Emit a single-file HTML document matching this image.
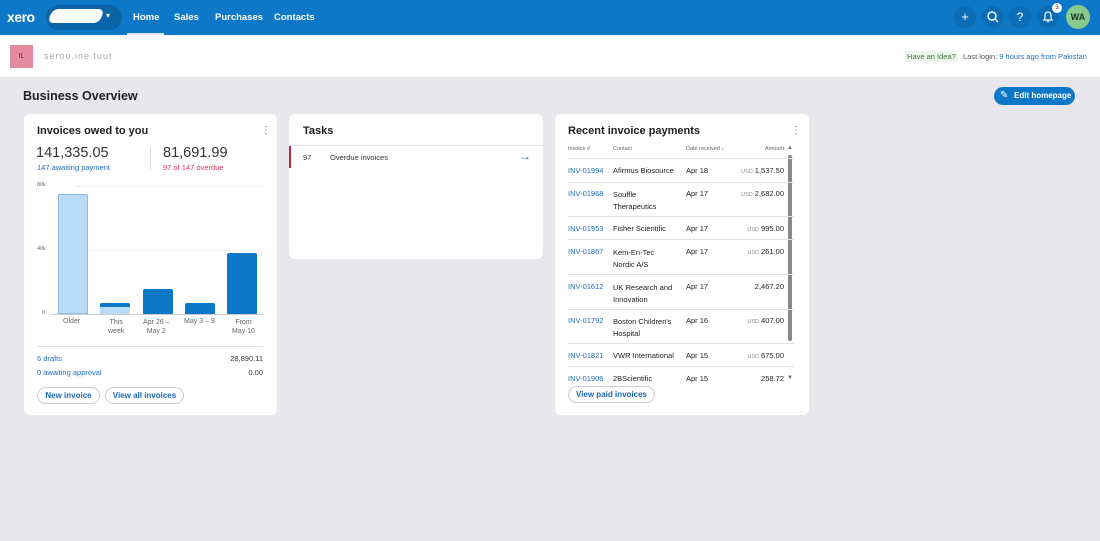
<!DOCTYPE html>
<html><head><meta charset="utf-8"><style>
*{box-sizing:border-box;margin:0;padding:0}
body{width:1100px;height:541px;background:#e7e7ec;font-family:"Liberation Sans",sans-serif;position:relative;overflow:hidden;color:#222}
.a{position:absolute;white-space:nowrap}
.nav{position:absolute;left:0;top:0;width:1100px;height:35px;background:#0c78c7}
.hdr{position:absolute;left:0;top:35px;width:1100px;height:42px;background:#fff}
.card{position:absolute;background:#fff;border-radius:6px}
.t{font-size:11px;font-weight:bold;color:#1e1e1e}
.s{font-size:7.5px}
.blue{color:#1f6fbf}
.btn{position:absolute;height:17px;border:1px solid #ccd;border-radius:9px;font-size:8px;font-weight:bold;color:#1a68b8;text-align:center;line-height:15px}
.row{position:absolute;left:13px;width:226px;border-top:1px solid #e2e2e2}
.ic{position:absolute;width:22px;height:22px;border-radius:11px;background:#0a6db5;top:6px;color:#fff;text-align:center;font-size:13px;line-height:22px}
.nl{position:absolute;top:12px;color:#fff;font-size:9.5px;font-weight:bold}
</style></head><body>
<div class="nav">
<div class="a" style="left:7px;top:9px;color:#fff;font-size:14px;font-weight:bold;letter-spacing:-0.5px">xero</div>
<div class="a" style="left:46px;top:5px;width:76px;height:25px;border-radius:12px;background:#0a65a8"></div>
<div class="a" style="left:50px;top:9px;width:52px;height:14px;background:#fff;border-radius:6px;transform:skewX(-20deg)"></div>
<div class="a" style="left:106px;top:11px;color:#fff;font-size:8px">▾</div>
<div class="nl" style="left:133px">Home</div>
<div class="a" style="left:127px;top:33px;width:37px;height:2px;background:#dfe8f2"></div>
<div class="nl" style="left:174px">Sales</div>
<div class="nl" style="left:215px">Purchases</div>
<div class="nl" style="left:274px">Contacts</div>
<div class="ic" style="left:954px">+</div>
<div class="ic" style="left:982px"><svg width="22" height="22"><circle cx="10" cy="10" r="4" stroke="#fff" stroke-width="1.4" fill="none"/><path d="M13 13l3 3" stroke="#fff" stroke-width="1.4"/></svg></div>
<div class="ic" style="left:1009px;font-size:12px">?</div>
<div class="ic" style="left:1037px"><svg width="22" height="22"><path d="M7 14h8l-1-2v-3a3 3 0 0 0-6 0v3z M10 15.5h2" stroke="#fff" stroke-width="1.2" fill="none"/></svg></div>
<div class="a" style="left:1052px;top:3px;width:10px;height:10px;border-radius:5px;background:#fff;font-size:6px;text-align:center;line-height:10px;color:#333">3</div>
<div class="a" style="left:1066px;top:5px;width:24px;height:24px;border-radius:12px;background:#87c98f;font-size:9px;font-weight:bold;text-align:center;line-height:24px;color:#1a3a1a">WA</div>
</div>
<div class="hdr">
<div class="a" style="left:10px;top:10px;width:23px;height:23px;background:#e48aa1;font-size:7px;text-align:center;line-height:23px;color:#333">IL</div>
<div class="a" style="left:44px;top:16px;font-size:9px;color:#aaa;letter-spacing:1px">seroo.ine tuut</div>
<div class="a" style="left:905px;top:16px;font-size:7.5px;color:#3a7d3a;background:#eef6ee;padding:1px 2px">Have an Idea?</div>
<div class="a" style="left:963px;top:17px;font-size:7.5px;color:#555">Last login: <span class="blue">9 hours ago from Pakistan</span></div>
</div>
<div class="a" style="left:23px;top:89px;font-size:12.5px;font-weight:bold">Business Overview</div>
<div class="a" style="left:994px;top:87px;width:81px;height:18px;border-radius:9px;background:#0c78c7;color:#fff;font-size:8px;font-weight:bold;line-height:18px;padding-left:20px">Edit homepage</div>
<div class="a" style="left:1000px;top:90px;color:#fff;font-size:10px">✎</div>

<div class="card" style="left:24px;top:114px;width:253px;height:301px">
<div class="a t" style="left:13px;top:11px">Invoices owed to you</div>
<div class="a" style="left:237px;top:11px;font-size:10px;color:#666">⋮</div>
<div class="a" style="left:12px;top:31px;font-size:14.5px;color:#333">141,335.05</div>
<div class="a s blue" style="left:13px;top:49px">147 awaiting payment</div>
<div class="a" style="left:126px;top:33px;width:1px;height:24px;background:#ddd"></div>
<div class="a" style="left:139px;top:31px;font-size:14.5px;color:#333">81,691.99</div>
<div class="a s" style="left:139px;top:49px;color:#e0365f">97 of 147 overdue</div>
<div class="a" style="left:13px;top:68px;font-size:5.5px;color:#666">80k</div>
<div class="a" style="left:13px;top:132px;font-size:5.5px;color:#666">40k</div>
<div class="a" style="left:18px;top:196px;font-size:5.5px;color:#666">0</div>
<div class="a" style="left:52px;top:72px;width:188px;height:1px;background:#eee"></div>
<div class="a" style="left:52px;top:136px;width:188px;height:1px;background:#eee"></div>
<div class="a" style="left:27px;top:200px;width:213px;height:1px;background:#ccc"></div>
<div class="a" style="left:34px;top:80px;width:30px;height:120px;background:#b8dcf8;border:1px solid #8bbde6;border-radius:2px 2px 0 0"></div>
<div class="a" style="left:76px;top:189px;width:30px;height:11px;background:#b8dcf8;border-top:4px solid #0c78c7;border-radius:2px 2px 0 0"></div>
<div class="a" style="left:119px;top:175px;width:30px;height:25px;background:#0c78c7;border-radius:2px 2px 0 0"></div>
<div class="a" style="left:161px;top:189px;width:30px;height:11px;background:#0c78c7;border-radius:2px 2px 0 0"></div>
<div class="a" style="left:203px;top:139px;width:30px;height:61px;background:#0c78c7;border-radius:2px 2px 0 0"></div>
<div class="a" style="left:39px;top:204px;font-size:7px;color:#666">Older</div>
<div class="a" style="left:84px;top:204px;font-size:7px;color:#666;text-align:center;line-height:9px">This<br>week</div>
<div class="a" style="left:119px;top:204px;font-size:7px;color:#666;text-align:center;line-height:9px">Apr 26 –<br>May 2</div>
<div class="a" style="left:160px;top:204px;font-size:7px;color:#666">May 3 – 9</div>
<div class="a" style="left:208px;top:204px;font-size:7px;color:#666;text-align:center;line-height:9px">From<br>May 10</div>
<div class="a" style="left:13px;top:232px;width:226px;height:1px;background:#e2e2e2"></div>
<div class="a s blue" style="left:13px;top:240px">6 drafts</div>
<div class="a s" style="right:14px;top:240px;color:#333">28,890.11</div>
<div class="a s blue" style="left:13px;top:254px">0 awaiting approval</div>
<div class="a s" style="right:14px;top:254px;color:#333">0.00</div>
<div class="btn" style="left:13px;top:273px;width:63px">New invoice</div>
<div class="btn" style="left:81px;top:273px;width:79px">View all invoices</div>
</div>

<div class="card" style="left:289px;top:114px;width:254px;height:145px">
<div class="a t" style="left:14px;top:11px">Tasks</div>
<div class="a" style="left:0;top:31px;width:254px;height:1px;background:#e4e4e4"></div>
<div class="a" style="left:0;top:32px;width:2px;height:22px;background:#c0213f"></div>
<div class="a s" style="left:14px;top:39px;color:#333">97</div>
<div class="a s" style="left:41px;top:39px;color:#333">Overdue invoices</div>
<div class="a" style="left:230px;top:35px;font-size:12px;font-weight:bold;color:#1a68b8">→</div>
</div>

<div class="card" style="left:555px;top:114px;width:254px;height:301px">
<div class="a t" style="left:13px;top:11px">Recent invoice payments</div>
<div class="a" style="left:236px;top:11px;font-size:10px;color:#666">⋮</div>
<div class="a" style="left:13px;top:32px;font-size:5.5px;color:#666">Invoice #</div>
<div class="a" style="left:58px;top:32px;font-size:5.5px;color:#666">Contact</div>
<div class="a" style="left:131px;top:32px;font-size:5.5px;color:#666">Date received ↓</div>
<div class="a" style="right:25px;top:32px;font-size:5.5px;color:#666">Amount</div>
<div class="a" style="left:232px;top:31px;font-size:6px;color:#666">▲</div>
<div class="a" style="left:233px;top:41px;width:4px;height:186px;background:#8a8a8a;border-radius:2px"></div>
<div class="a" style="left:232px;top:261px;font-size:6px;color:#666">▼</div>
<div class="row" style="top:44px"></div>
<div class="a s blue" style="left:13px;top:52px">INV-01994</div><div class="a s" style="left:58px;top:52px">Afirmus Biosource</div><div class="a s" style="left:131px;top:52px">Apr 18</div><div class="a s" style="right:25px;top:52px"><span style="font-size:5.5px;color:#888">USD</span> 1,537.50</div>
<div class="row" style="top:68px"></div>
<div class="a s blue" style="left:13px;top:75px">INV-01968</div><div class="a s" style="left:58px;top:75px;line-height:12px">Souffle<br>Therapeutics</div><div class="a s" style="left:131px;top:75px">Apr 17</div><div class="a s" style="right:25px;top:75px"><span style="font-size:5.5px;color:#888">USD</span> 2,682.00</div>
<div class="row" style="top:102px"></div>
<div class="a s blue" style="left:13px;top:110px">INV-01953</div><div class="a s" style="left:58px;top:110px">Fisher Scientific</div><div class="a s" style="left:131px;top:110px">Apr 17</div><div class="a s" style="right:25px;top:110px"><span style="font-size:5.5px;color:#888">USD</span> 995.00</div>
<div class="row" style="top:125px"></div>
<div class="a s blue" style="left:13px;top:133px">INV-01867</div><div class="a s" style="left:58px;top:133px;line-height:12px">Kem-En-Tec<br>Nordic A/S</div><div class="a s" style="left:131px;top:133px">Apr 17</div><div class="a s" style="right:25px;top:133px"><span style="font-size:5.5px;color:#888">USD</span> 261.00</div>
<div class="row" style="top:160px"></div>
<div class="a s blue" style="left:13px;top:168px">INV-01612</div><div class="a s" style="left:58px;top:168px;line-height:12px">UK Research and<br>Innovation</div><div class="a s" style="left:131px;top:168px">Apr 17</div><div class="a s" style="right:25px;top:168px">2,467.20</div>
<div class="row" style="top:195px"></div>
<div class="a s blue" style="left:13px;top:202px">INV-01792</div><div class="a s" style="left:58px;top:202px;line-height:12px">Boston Children's<br>Hospital</div><div class="a s" style="left:131px;top:202px">Apr 16</div><div class="a s" style="right:25px;top:202px"><span style="font-size:5.5px;color:#888">USD</span> 407.00</div>
<div class="row" style="top:229px"></div>
<div class="a s blue" style="left:13px;top:237px">INV-01821</div><div class="a s" style="left:58px;top:237px">VWR International</div><div class="a s" style="left:131px;top:237px">Apr 15</div><div class="a s" style="right:25px;top:237px"><span style="font-size:5.5px;color:#888">USD</span> 675.00</div>
<div class="row" style="top:252px"></div>
<div class="a s blue" style="left:13px;top:260px">INV-01906</div><div class="a s" style="left:58px;top:260px">2BScientific</div><div class="a s" style="left:131px;top:260px">Apr 15</div><div class="a s" style="right:25px;top:260px">258.72</div>
<div class="btn" style="left:13px;top:272px;width:87px;background:#fff">View paid invoices</div>
</div>
</body></html>
